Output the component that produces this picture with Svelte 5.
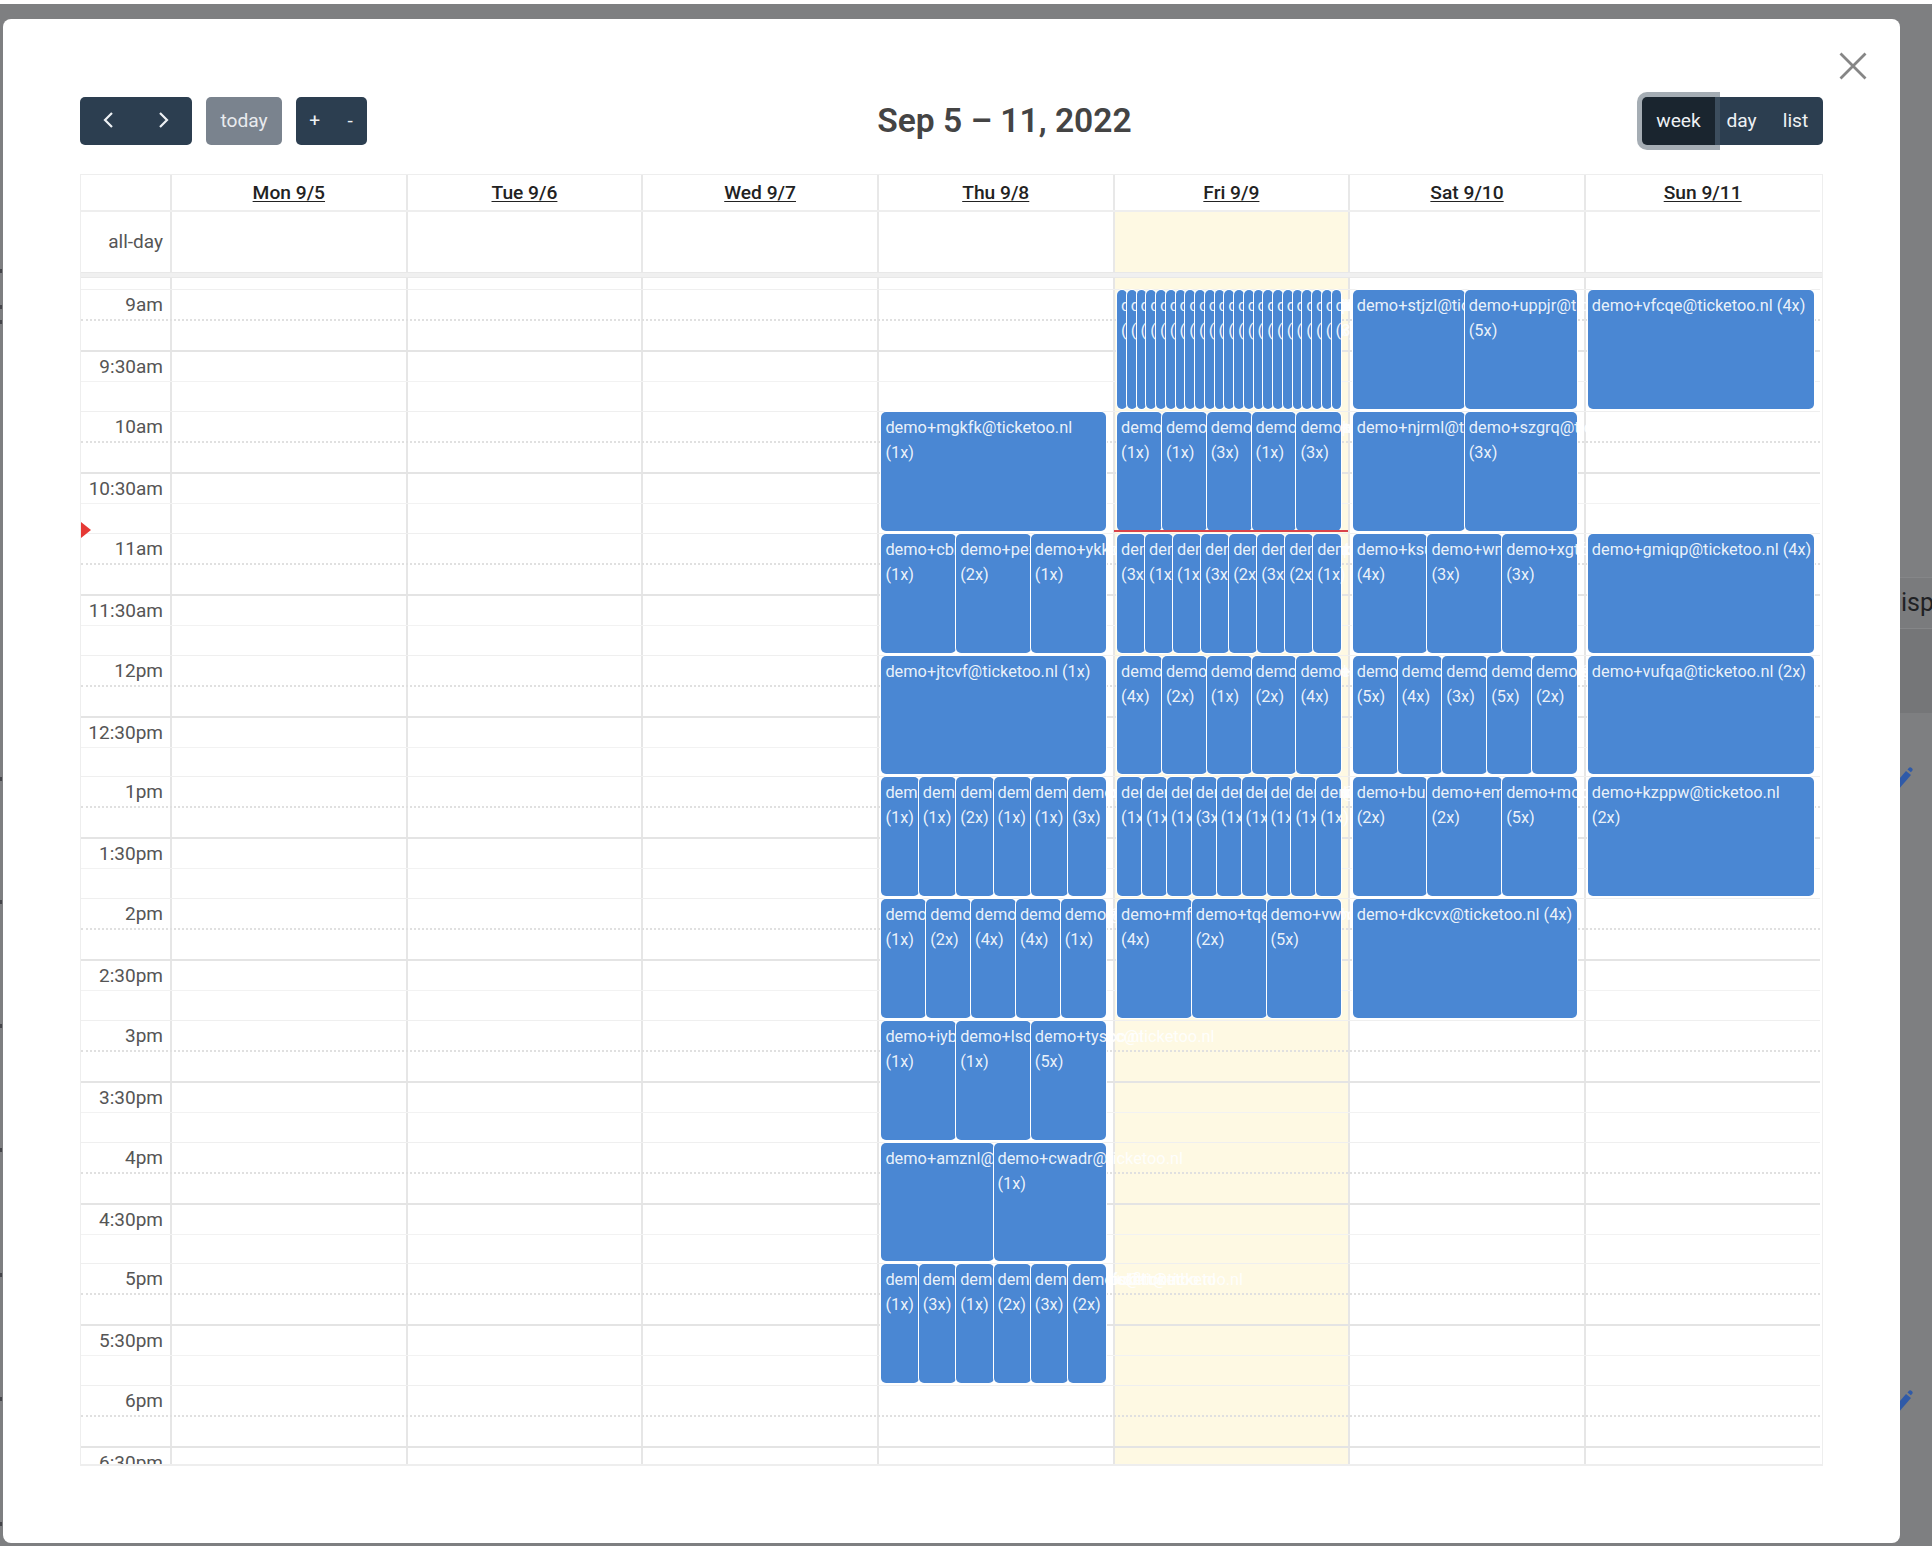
<script>
  const days = ['Mon 9/5', 'Tue 9/6', 'Wed 9/7', 'Thu 9/8', 'Fri 9/9', 'Sat 9/10', 'Sun 9/11'];
  const times = ['9am','9:30am','10am','10:30am','11am','11:30am','12pm','12:30pm','1pm','1:30pm','2pm','2:30pm','3pm','3:30pm','4pm','4:30pm','5pm','5:30pm','6pm','6:30pm'];
  const hours = 10;
  const ev = (s) => s.split(' ').map((p) => {
    const [n, c] = p.split(':');
    return { text: `demo+${n}@ticketoo.nl` + (c ? ` (${c}x)` : '') };
  });
  const slim = 'qwxyz abcde fghij klmno pqrst uvwxy zabcd efghi jklmn opqrs tuvwx yzabc defgh ijklm nopqr stuvw xyzab cdefg hijkl mnopq rstuv wxyza bcdef';
  const slimCounts = [1,2,1,3,1,2,4,1,1,2,3,1,5,2,1,1,3,2,1,4,1,2,3];
  const slimStr = slim.split(' ').map((n, i) => `${n}:${slimCounts[i]}`).join(' ');
  const columns = [
    [], [], [],
    [null,
      ev('mgkfk:1'),
      ev('cbhtr:1 pezkl:2 ykkqa:1'),
      ev('jtcvf:1'),
      ev('dhwrq:1 dmkpt:1 dxvaz:2 dzcnl:1 dobgu:1 dqfye:3'),
      ev('drtpk:1 dsmoa:2 dvbjc:4 dyxlq:4 dgnwe:1'),
      ev('iybrk:1 lscwd:1 tyscc:5'),
      ev('amznl cwadr:1'),
      ev('dauvk:1 dbpxn:3 dczqo:1 ddjhm:2 dekfs:3 dflrt:2'),
      null],
    [ev(slimStr),
      ev('daoqz:1 dbhuw:1 dcvkm:3 ddsep:1 dexty:3'),
      ev('dfazq:3 dgbvn:1 dhcwm:1 didxk:3 djeyl:2 dkfzp:3 dlgao:2 dmhbi:1'),
      ev('dnicj:4 dojdk:2 dpkel:1 dqlfm:2 drmgn:4'),
      ev('dsnho:1 dtoip:1 dupjq:1 dvqkr:3 dwrls:1 dxsmt:1 dytnu:1 dzuov:1 davpw:1'),
      ev('mfxqa:4 tqerz:2 vwhnk:5'),
      null, null, null, null],
    [ev('stjzl uppjr:5'),
      ev('njrml szgrq:3'),
      ev('ksumb:4 wnryd:3 xgtfo:3'),
      ev('dcwxq:5 ddxyr:4 deyzs:3 dfzat:5 dgabu:2'),
      ev('buxnq:2 emfvz:2 mocjk:5'),
      ev('dkcvx:4'),
      null, null, null, null],
    [ev('vfcqe:4'),
      null,
      ev('gmiqp:4'),
      ev('vufqa:2'),
      ev('kzppw:2'),
      null, null, null, null, null],
  ];
  const full = (c) => Array.from({ length: hours }, (_, i) => c[i] ?? null);
  const marks = [265, 301, 316, 773, 896, 1020, 1144, 1269, 1393, 1518];
</script>

<div class="page">
  <div class="overlay">
    <div class="backdrop">
      {#each marks as y}
        <i class="mark" style="top:{y}px"></i>
      {/each}
      <div class="band"><span>isp</span></div>
      <svg class="pencil p1" viewBox="0 0 20 20"><path d="M0 20L13 5l5 4L5 24z" fill="#2f5aa8"/><path d="M14.5 3.5l1.5-1.7a1.5 1.5 0 0 1 2-.2l1.2 1a1.5 1.5 0 0 1 .2 2l-1.5 1.7z" fill="#2f5aa8"/></svg>
      <svg class="pencil p2" viewBox="0 0 20 20"><path d="M0 20L13 5l5 4L5 24z" fill="#2f5aa8"/><path d="M14.5 3.5l1.5-1.7a1.5 1.5 0 0 1 2-.2l1.2 1a1.5 1.5 0 0 1 .2 2l-1.5 1.7z" fill="#2f5aa8"/></svg>
    </div>

    <div class="modal">
      <button class="close" aria-label="Close">
        <svg viewBox="0 0 28 28" width="28" height="28"><path d="M1.5 1.5l25 25M26.5 1.5l-25 25" stroke="#868686" stroke-width="2.8" fill="none"/></svg>
      </button>

      <div class="toolbar">
        <div class="left">
          <div class="group">
            <button class="btn icon" aria-label="prev">
              <svg viewBox="0 0 14 20" width="14" height="20"><path d="M11 3L4 10l7 7" stroke="#eef1f4" stroke-width="2.2" fill="none"/></svg>
            </button>
            <button class="btn icon" aria-label="next">
              <svg viewBox="0 0 14 20" width="14" height="20"><path d="M3 3l7 7-7 7" stroke="#eef1f4" stroke-width="2.2" fill="none"/></svg>
            </button>
          </div>
          <button class="btn today">today</button>
          <div class="group">
            <button class="btn pm">+</button>
            <button class="btn pm">-</button>
          </div>
        </div>
        <h2>Sep 5 – 11, 2022</h2>
        <div class="group views">
          <button class="btn week">week</button>
          <button class="btn day">day</button>
          <button class="btn list">list</button>
        </div>
      </div>

      <div class="cal">
        <div class="row headrow">
          <div class="axis"></div>
          {#each days as d}<div class="hcell"><u>{d}</u></div>{/each}
        </div>
        <div class="row alldayrow">
          <div class="axis allday">all-day</div>
          {#each days as d, i}<div class="adcell" class:today-bg={i === 4}></div>{/each}
        </div>
        <div class="divider"></div>

        <div class="grid">
          <div class="row bgcols">
            <div class="axis"></div>
            {#each days as d, i}<div class="bgcell" class:today-bg={i === 4}></div>{/each}
          </div>

          <div class="slots">
            {#each times as t, i}
              <div class="slot" class:half={i % 2 === 1}>
                <span class="label">{t}</span>
                <div class="mid"></div>
              </div>
            {/each}
          </div>

          <div class="row lanes">
            <div class="axis"></div>
            {#each columns as c, i}
              <div class="lane" class:thu={i === 3} class:sun={i === 6}>
                {#each full(c) as block}
                  <div class="block">
                    {#if block}
                      {#each block as e}
                        <div class="event">{e.text}</div>
                      {/each}
                    {/if}
                  </div>
                {/each}
              </div>
            {/each}
          </div>

          <div class="nowline"></div>
          <div class="nowarrow"></div>
        </div>
      </div>
    </div>
  </div>
</div>

<style>
  :global(body) {
    margin: 0;
    background: #fff;
  }
  * {
    box-sizing: border-box;
  }
  .page {
    width: 1932px;
    height: 1546px;
    padding-top: 4px;
    background: #fff;
    font-family: Roboto, "Liberation Sans", sans-serif;
    overflow: hidden;
  }
  .overlay {
    position: relative;
    height: 1542px;
    background: #7e7f81;
    padding: 15px 32px 3px 3px;
  }
  .backdrop {
    position: absolute;
    inset: 0;
    overflow: hidden;
  }
  .mark {
    position: absolute;
    left: 0;
    width: 2px;
    height: 4px;
    background: #45464a;
  }
  .band {
    position: absolute;
    left: 1900px;
    top: 573px;
    width: 32px;
    height: 136px;
    background: #757678;
  }
  .band span {
    display: block;
    height: 52px;
    border-top: 1px solid #858688;
    border-bottom: 1px solid #858688;
    background: #7a7b7d;
    font-size: 25px;
    line-height: 50px;
    color: #1f2124;
    padding-left: 1px;
  }
  .pencil {
    position: absolute;
    left: 1893px;
    width: 20px;
    height: 20px;
    overflow: visible;
  }
  .p1 {
    top: 762px;
  }
  .p2 {
    top: 1385px;
  }
  .modal {
    position: relative;
    height: 100%;
    background: #fff;
    border-radius: 8px;
    padding: 78px 77px 0 77px;
  }
  .close {
    position: absolute;
    top: 33px;
    right: 33px;
    width: 28px;
    height: 28px;
    padding: 0;
    border: 0;
    background: none;
    display: block;
  }
  .close svg {
    display: block;
  }
  .toolbar {
    display: flex;
    justify-content: space-between;
    align-items: center;
    height: 48px;
    margin-bottom: 29px;
  }
  .left {
    display: flex;
    gap: 14px;
  }
  h2 {
    margin: 0;
    font-size: 33.6px;
    font-weight: 600;
    color: #444;
    line-height: 48px;
  }
  .group {
    display: flex;
    border-radius: 5px;
  }
  .btn {
    height: 48px;
    border: 0;
    background: #2c3e50;
    color: #eef1f4;
    font-family: inherit;
    font-size: 19.2px;
    padding: 0 0 2px;
    display: flex;
    align-items: center;
    justify-content: center;
  }
  .group .btn:first-child {
    border-radius: 5px 0 0 5px;
  }
  .group .btn:last-child {
    border-radius: 0 5px 5px 0;
  }
  .icon {
    width: 56px;
  }
  .today {
    width: 76px;
    background: #7a838e;
    border-radius: 5px;
    color: #e9ebee;
  }
  .pm {
    width: 35.5px;
    padding-left: 2px;
  }
  .week {
    position: relative;
    width: 73px;
    background: #1a252f;
    box-shadow: 0 0 0 5px rgba(76, 91, 106, 0.5);
    z-index: 1;
  }
  .day {
    width: 53px;
  }
  .list {
    width: 55px;
  }
  .cal {
    height: 1292px;
    border: 1px solid #eee;
    border-bottom-width: 2px;
    overflow: hidden;
    display: flex;
    flex-direction: column;
  }
  .row {
    display: grid;
    grid-template-columns: 89px repeat(7, minmax(0, 1fr));
    padding-right: 2.5px;
  }
  .headrow {
    height: 37px;
    border-bottom: 2px solid #eee;
    margin-right: 2.5px;
    padding-right: 0;
  }
  .hcell {
    border-left: 2px solid #e8e8e8;
    text-align: center;
    font-size: 19.2px;
    font-weight: 500;
    line-height: 35px;
    color: #222;
  }
  .hcell u {
    text-underline-offset: 2px;
  }
  .alldayrow {
    height: 60px;
    background: #fff;
  }
  .allday {
    text-align: right;
    padding-right: 7px;
    font-size: 19px;
    line-height: 29px;
    padding-top: 15px;
    color: #555;
  }
  .adcell {
    border-left: 2px solid #e8e8e8;
  }
  .today-bg {
    background: #fef9e3;
  }
  .divider {
    height: 6px;
    flex: none;
    background: #f0f0f0;
    border-top: 1px solid #e8e8e8;
    border-bottom: 1px solid #e8e8e8;
  }
  .grid {
    position: relative;
    flex: 1;
    min-height: 0;
    overflow: hidden;
  }
  .bgcols,
  .lanes {
    position: absolute;
    inset: 0;
  }
  .bgcell {
    border-left: 2px solid #e6e6e6;
  }
  .slots {
    position: relative;
    padding-top: 11.4px;
    margin-right: 2px;
  }
  .slot {
    position: relative;
    height: 60.875px;
    border-top: 1.5px solid #efefef;
  }
  .slot.half {
    border-top: 2px solid #e4e4e4;
  }
  .label {
    display: block;
    width: 89px;
    padding: 2px 7px 0 0;
    text-align: right;
    font-size: 19px;
    line-height: 25px;
    color: #555;
  }
  .mid {
    position: absolute;
    left: 0;
    right: 0;
    top: 29px;
    border-top: 2px dotted #e0e0e0;
  }
  .half .mid {
    border-top: 1px solid #f2f2f2;
  }
  .lane {
    display: flex;
    flex-direction: column;
    padding: 11.4px 7px 0 4.5px;
    min-width: 0;
  }
  .lane.sun {
    padding-right: 5px;
  }
  .block {
    display: flex;
    flex: none;
    height: 121.75px;
    padding: 1px 0 2px;
  }
  .event {
    position: relative;
    flex: 1 1 0;
    min-width: 0;
    background: #4a87d3;
    border-radius: 5px;
    box-shadow: 0 0 0 1px #fff;
    color: rgba(255, 255, 255, 0.9);
    font-size: 16.32px;
    line-height: 25px;
    padding: 3px 0 0 4px;
  }
  .thu .event {
    padding-right: 5px;
  }
  .sun .event {
    padding-left: 3.5px;
    padding-right: 3.2px;
  }
  .nowline {
    position: absolute;
    left: 1032.5px;
    width: 234px;
    top: 251.5px;
    border-top: 2px solid #d9434a;
  }
  .nowarrow {
    position: absolute;
    left: 0;
    top: 244px;
    width: 0;
    height: 0;
    border-style: solid;
    border-width: 8px 0 8px 10px;
    border-color: transparent transparent transparent #e53935;
  }
</style>
